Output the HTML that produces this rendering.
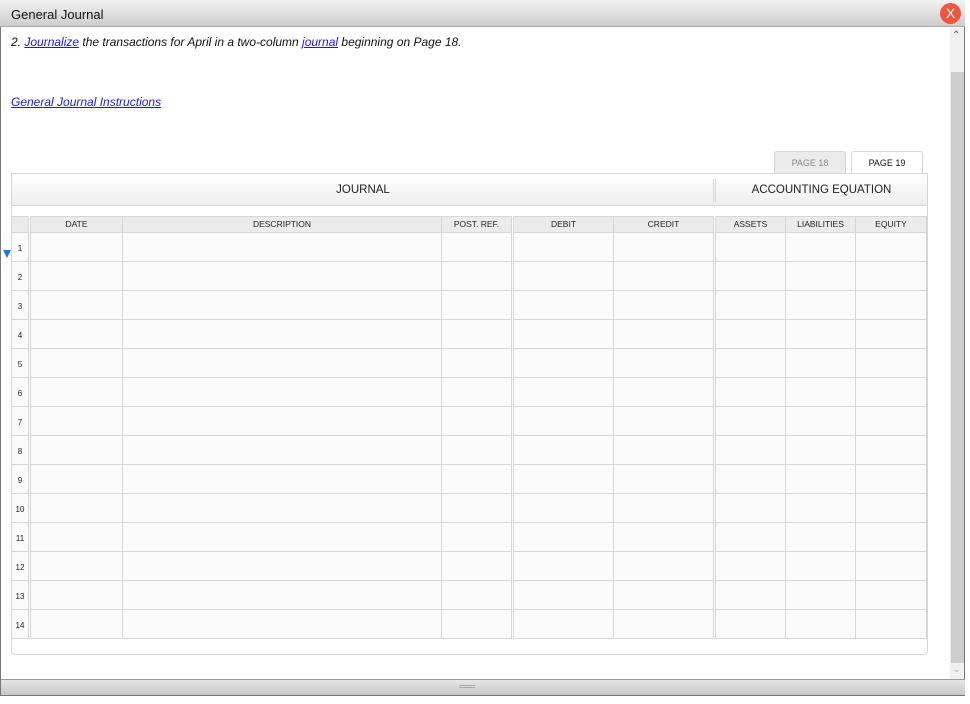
<!DOCTYPE html>
<html><head><meta charset="utf-8"><style>
*{margin:0;padding:0;box-sizing:border-box}
body{width:970px;height:704px;background:#fff;position:relative;overflow:hidden;font-family:"Liberation Sans",Arial,sans-serif}
.a{position:absolute}
.frame{left:0;top:0;width:965px;height:696px;border:1px solid #777;border-top:none}
.title{left:0;top:0;width:965px;height:27px;background:linear-gradient(#f2f2f2,#cdcdcd);border-bottom:1px solid #aaa;font-size:13px;color:#111;padding:7px 0 0 11px}
.close{left:940px;top:3px;width:21px;height:21px;border-radius:50%;background:#f0563f;color:#fff;font-size:14px;text-align:center;line-height:21px}
.txt{font-size:12px;font-style:italic;color:#111}
a{color:#1a1ae6;text-decoration:underline}
.sb{left:950px;top:28px;width:14px;height:651px;background:#f0f0f0}
.thumb{left:951px;top:72px;width:13px;height:591px;background:#cdcdcd}
.bot{left:1px;top:679px;width:964px;height:17px;background:linear-gradient(#e6e6e6,#c8c8c8);border-top:1px solid #999;border-bottom:1px solid #777}
.panel{left:11px;top:173px;width:917px;height:482px;border:1px solid #d6d6d6;border-radius:0 0 4px 4px}
.hdr{left:12px;top:174px;width:915px;height:32px;background:linear-gradient(#fff,#eeeeee);border-bottom:1px solid #d6d6d6;font-size:11.5px;color:#222}
.tab{top:151px;height:23px;border:1px solid #d6d6d6;border-bottom:none;border-radius:3px 3px 0 0;font-size:9px;text-align:center;line-height:22px}
.col{top:216px;height:423px;border:1px solid #d6d6d6;background:#fafafa;background-image:repeating-linear-gradient(to bottom,transparent 0 28px,#d6d6d6 28px 29px);background-position:0 16px;background-repeat:repeat-y}
.ch{position:absolute;left:0;top:0;right:0;height:16px;background:#ebebeb;border-bottom:1px solid #d6d6d6;font-size:8.5px;text-align:center;line-height:15px;color:#222}
.rn{position:absolute;left:0;width:100%;text-align:center;font-size:8px;color:#222}
</style></head><body>
<div class="a frame"></div>
<div class="a title">General Journal</div>
<div class="a close">X</div>
<div class="a txt" style="left:11px;top:35px">2. <a>Journalize</a> the transactions for April in a two-column <a>journal</a> beginning on Page 18.</div>
<div class="a txt" style="left:11px;top:95px"><a>General Journal Instructions</a></div>
<div class="a sb"></div>
<div class="a thumb"></div>
<div class="a" style="left:952px;top:30px;font-size:10px;color:#555">&#x2303;</div>
<div class="a" style="left:953px;top:664px;font-size:9px;color:#aaa">&#x2304;</div>
<div class="a bot"></div>
<div class="a" style="left:459px;top:685px;width:16px;height:3px;border-top:1px solid #aaa;border-bottom:1px solid #aaa"></div>
<div class="a tab" style="left:774px;width:72px;background:#ebebeb;color:#888">PAGE 18</div>
<div class="a tab" style="left:851px;width:72px;background:#fff;color:#111;height:24px">PAGE 19</div>
<div class="a panel"></div>
<div class="a hdr">
 <div class="a" style="left:0;width:702px;top:10px;text-align:center">JOURNAL</div>
 <div class="a" style="left:701px;top:5px;width:3px;height:23px;border-left:1px solid #d6d6d6;border-right:1px solid #d6d6d6"></div>
 <div class="a" style="left:704px;width:211px;top:10px;text-align:center">ACCOUNTING EQUATION</div>
</div>
<div class="a col" style="left:11px;width:18px"><div class="ch"></div>
<div class="rn" style="top:27px">1</div><div class="rn" style="top:56px">2</div><div class="rn" style="top:85px">3</div><div class="rn" style="top:114px">4</div><div class="rn" style="top:143px">5</div><div class="rn" style="top:172px">6</div><div class="rn" style="top:201px">7</div><div class="rn" style="top:230px">8</div><div class="rn" style="top:259px">9</div><div class="rn" style="top:288px">10</div><div class="rn" style="top:317px">11</div><div class="rn" style="top:346px">12</div><div class="rn" style="top:375px">13</div><div class="rn" style="top:404px">14</div></div>
<div class="a col" style="left:30px;width:93px"><div class="ch">DATE</div></div>
<div class="a col" style="left:122px;width:320px"><div class="ch">DESCRIPTION</div></div>
<div class="a col" style="left:441px;width:71px"><div class="ch">POST. REF.</div></div>
<div class="a col" style="left:513px;width:101px"><div class="ch">DEBIT</div></div>
<div class="a col" style="left:613px;width:101px"><div class="ch">CREDIT</div></div>
<div class="a col" style="left:715px;width:71px"><div class="ch">ASSETS</div></div>
<div class="a col" style="left:785px;width:71px"><div class="ch">LIABILITIES</div></div>
<div class="a col" style="left:855px;width:72px"><div class="ch">EQUITY</div></div>
<div class="a" style="left:3px;top:250px;width:0;height:0;border-left:4px solid transparent;border-right:4px solid transparent;border-top:8px solid #1a73e8"></div>
</body></html>
